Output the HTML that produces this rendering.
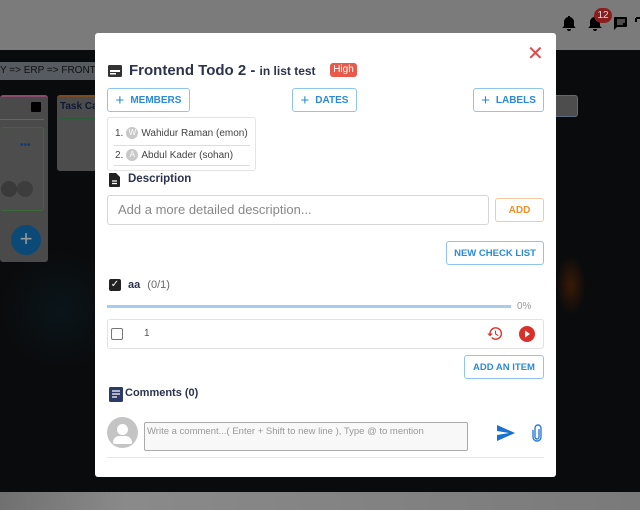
<!DOCTYPE html>
<html><head><style>
*{box-sizing:border-box;margin:0;padding:0}
body{width:640px;height:510px;overflow:hidden;position:relative;background:#0a0b0d;font-family:"Liberation Sans",sans-serif}
.a{position:absolute}
.btn{position:absolute;border:1px solid #90c4f0;border-radius:3px;color:#2b8ad8;font-size:10px;font-weight:bold;letter-spacing:0;display:flex;align-items:center;justify-content:center;background:#fff;white-space:nowrap}
.av{display:inline-block;width:12px;height:12px;border-radius:50%;background:#c8c8c8;color:#fff;font-size:8px;text-align:center;line-height:12px;margin:0 3px}
.row{position:absolute;left:7px;display:flex;align-items:center;white-space:nowrap}
</style></head><body>
<div class="a" style="left:0;top:0;width:640px;height:50px;background:#7b7b7b"></div>
<div class="a" style="left:0;top:492px;width:640px;height:18px;background:linear-gradient(90deg,#707070,#8a8a8a 20%,#7a7a7a)"></div>
<div class="a" style="left:0;top:250px;width:120px;height:120px;background:radial-gradient(#0a1c22,transparent 70%);opacity:.6"></div>
<div class="a" style="left:556px;top:255px;width:30px;height:60px;background:radial-gradient(#3a1a06,transparent 70%)"></div>
<svg class="a" style="left:560px;top:14px" width="80" height="20" viewBox="0 0 80 20">
<path d="M9 17a2 2 0 0 0 2-2H7a2 2 0 0 0 2 2zM14 12V8a5 5 0 0 0-4-5V2H8v1a5 5 0 0 0-4 5v4l-1.5 1.5V14h13v-.5z" fill="#000"/>
<path d="M35 17a2 2 0 0 0 2-2h-4a2 2 0 0 0 2 2zM40 12V8a5 5 0 0 0-4-5V2h-2v1a5 5 0 0 0-4 5v4l-1.5 1.5V14h13v-.5z" fill="#000"/>
<path d="M55 3h11a1 1 0 0 1 1 1v8a1 1 0 0 1-1 1h-9l-3 3V4a1 1 0 0 1 1-1z" fill="#000"/><path d="M57 6h8M57 8h8M57 10h6" stroke="#7b7b7b" stroke-width="1.2"/>
<path d="M76 4h4M76 4v4" stroke="#000" stroke-width="2" fill="none"/>
</svg>
<div class="a" style="left:594px;top:8px;width:18px;height:15px;border-radius:8px;background:#8a1e1e;color:#ddd;font-size:10px;text-align:center;line-height:15px">12</div>
<div class="a" style="left:0;top:62px;width:100px;height:18px;background:#555b60;color:#111;font-size:10px;line-height:18px;white-space:nowrap;overflow:hidden">Y =&gt; ERP =&gt; FRONTE</div>
<div class="a" style="left:0;top:95px;width:48px;height:167px;background:#4a4a4a;border-radius:3px;border-top:2px solid #8a4a6a"></div>
<div class="a" style="left:0;top:119px;width:44px;height:1px;background:#8a5a30"></div>
<div class="a" style="left:31px;top:102px;width:10px;height:10px;background:#000;border-radius:1px"></div>
<div class="a" style="left:0;top:127px;width:44px;height:84px;border:1px solid #3a6a3a;border-left:none;border-radius:3px;background:#4d4d4d"></div>
<div class="a" style="left:20px;top:140px;color:#1a3a6a;font-size:10px;font-weight:bold">•••</div>
<div class="a" style="left:1px;top:181px;width:16px;height:16px;border-radius:50%;background:#3a3a3a"></div>
<div class="a" style="left:17px;top:181px;width:16px;height:16px;border-radius:50%;background:#3d3d3d"></div>
<div class="a" style="left:11px;top:225px;width:30px;height:30px;border-radius:50%;background:#0b4a77;color:#999;font-size:22px;text-align:center;line-height:28px">+</div>
<div class="a" style="left:57px;top:95px;width:40px;height:76px;background:#4c4c4c;border-radius:3px;border-top:2px solid #7a4a20;color:#0e1a33;font-size:10px;font-weight:bold;padding:4px 3px;white-space:nowrap;overflow:hidden">Task Ca<div style="height:1px;background:#2a5a3a;margin-top:6px;width:40px"></div></div>
<div class="a" style="left:556px;top:95px;width:22px;height:22px;background:#4d4d4d;border:1px solid #5a6a80;border-left:none;border-radius:0 3px 3px 0"></div>
<!-- modal -->
<div class="a" style="left:95px;top:33px;width:461px;height:444px;background:#fff;border-radius:3px"></div>
<div class="a" style="left:527px;top:44px;color:#e04848;font-size:20px;line-height:20px">✕</div>
<svg class="a" style="left:108px;top:65px" width="14" height="12" viewBox="0 0 14 12"><rect x="0" y="0" width="14" height="12" rx="1.5" fill="#333"/><rect x="2" y="5" width="10" height="2" fill="#fff"/><rect x="2" y="8" width="6" height="1.5" fill="#fff"/></svg>
<div class="a" style="left:129px;top:62px;color:#2b3350;font-size:15px;font-weight:bold;white-space:nowrap">Frontend Todo 2 - <span style="font-size:12px">in list test</span></div>
<div class="a" style="left:330px;top:63px;width:27px;height:14px;background:#e85a4a;color:#fff;font-size:10px;border-radius:3px;text-align:center;line-height:14px">High</div>
<div class="btn" style="left:107px;top:88px;width:83px;height:24px"><span style="font-size:15px;font-weight:normal;margin-right:6px">+</span>MEMBERS</div>
<div class="btn" style="left:292px;top:88px;width:65px;height:24px"><span style="font-size:15px;font-weight:normal;margin-right:6px">+</span>DATES</div>
<div class="btn" style="left:473px;top:88px;width:71px;height:24px"><span style="font-size:15px;font-weight:normal;margin-right:6px">+</span>LABELS</div>
<div class="a" style="left:107px;top:117px;width:149px;height:54px;border:1px solid #e4e4e4;border-radius:3px;font-size:10px;color:#444">
<div class="row" style="top:9px">1.<span class="av">W</span>Wahidur Raman (emon)</div>
<div style="position:absolute;left:6px;top:27px;width:136px;height:1px;background:#ddd"></div>
<div class="row" style="top:31px">2.<span class="av">A</span>Abdul Kader (sohan)</div>
<div style="position:absolute;left:6px;top:47px;width:136px;height:1px;background:#ddd"></div>
</div>
<svg class="a" style="left:109px;top:173px" width="11" height="14" viewBox="0 0 11 14"><path d="M0 1a1 1 0 0 1 1-1h6l4 4v9a1 1 0 0 1-1 1H1a1 1 0 0 1-1-1z" fill="#222"/><path d="M3 8h5M3 10.5h5" stroke="#fff" stroke-width="1.2"/></svg>
<div class="a" style="left:128px;top:173px;color:#2b3350;font-size:11.5px;font-weight:bold">Description</div>
<div class="a" style="left:107px;top:195px;width:382px;height:30px;border:1px solid #d6d6d6;border-radius:3px;color:#888;font-size:13px;line-height:28px;padding-left:10px">Add a more detailed description...</div>
<div class="btn" style="left:495px;top:198px;width:49px;height:24px;border-color:#f8c8a0;color:#f0902a">ADD</div>
<div class="btn" style="left:446px;top:241px;width:98px;height:24px;font-size:9.5px">NEW CHECK LIST</div>
<div class="a" style="left:109px;top:279px;width:12px;height:12px;background:#222;border-radius:2px;color:#fff;font-size:10px;line-height:12px;text-align:center">✓</div>
<div class="a" style="left:128px;top:279px;font-size:11px;color:#2b3350;font-weight:bold">aa <span style="font-weight:normal;color:#666;margin-left:4px">(0/1)</span></div>
<div class="a" style="left:107px;top:305px;width:404px;height:3px;background:#a8cbef"></div>
<div class="a" style="left:517px;top:301px;font-size:10px;color:#999">0%</div>
<div class="a" style="left:107px;top:319px;width:437px;height:30px;border:1px solid #e2e2e2;border-radius:3px"></div>
<div class="a" style="left:111px;top:328px;width:12px;height:12px;border:1.5px solid #777;border-radius:2px"></div>
<div class="a" style="left:144px;top:328px;font-size:10px;color:#555">1</div>
<svg class="a" style="left:486px;top:325px" width="18" height="17" viewBox="0 0 24 24"><path d="M13 3a9 9 0 0 0-9 9H1l4 4 4-4H6a7 7 0 1 1 2.05 4.95L6.64 18.36A9 9 0 1 0 13 3zm-1 5v5l4.25 2.52.77-1.28-3.52-2.09V8z" fill="#e0302a"/></svg>
<svg class="a" style="left:518px;top:325px" width="18" height="18" viewBox="0 0 18 18"><circle cx="9" cy="9" r="8" fill="#d9302a"/><path d="M7 5.5v7l5-3.5z" fill="#fff"/></svg>
<div class="btn" style="left:464px;top:355px;width:80px;height:24px;font-size:9.5px">ADD AN ITEM</div>
<svg class="a" style="left:109px;top:387px" width="14" height="15" viewBox="0 0 14 15"><rect width="14" height="15" rx="1.5" fill="#2b3a66"/><path d="M3 4h8M3 7h8M3 10h5" stroke="#fff" stroke-width="1.3"/></svg>
<div class="a" style="left:125px;top:387px;color:#2b3350;font-size:11px;font-weight:bold">Comments (0)</div>
<div class="a" style="left:107px;top:417px;width:31px;height:31px;border-radius:50%;background:#c4c4c4;overflow:hidden"><div style="position:absolute;left:10px;top:7px;width:11px;height:11px;border-radius:50%;background:#fff"></div><div style="position:absolute;left:6px;top:19px;width:19px;height:8px;border-radius:8px 8px 2px 2px;background:#fff"></div></div>
<div class="a" style="left:144px;top:422px;width:324px;height:29px;border:1px solid #aaa;border-radius:2px;background:#f8f8f8;font-size:9.5px;color:#999;padding:3px 2px;white-space:nowrap">Write a comment...( Enter + Shift to new line ), Type @ to mention</div>
<svg class="a" style="left:497px;top:425px" width="18" height="16" viewBox="0 0 18 16"><path d="M0 0l18 8-18 8 0-6 12-2-12-2z" fill="#1a72d0"/></svg>
<svg class="a" style="left:532px;top:424px" width="10" height="18" viewBox="0 0 10 18"><path d="M7 5v8a2 2 0 0 1-4 0V4a3 3 0 0 1 6 0v9a4 4 0 0 1-8 0V6" stroke="#2a7ad8" stroke-width="1.4" fill="none"/></svg>
<div class="a" style="left:107px;top:457px;width:437px;height:1px;background:#e6e6e6"></div>
</body></html>
